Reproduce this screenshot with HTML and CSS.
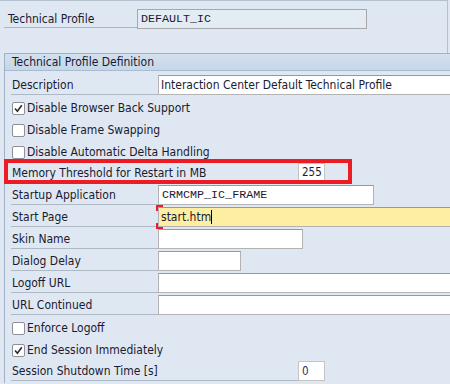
FILE: index.html
```html
<!DOCTYPE html>
<html lang="en">
<head>
  <meta charset="UTF-8" />
  <title>Technical Profile</title>
  <meta name="viewport" content="width=device-width, initial-scale=1.0" />
  <link rel="stylesheet" href="styles.css">
</head>
<body>
  <!-- Header profile key -->
  <div class="top">
    <span class="top-label">Technical Profile</span>
    <span class="field key mono">DEFAULT_IC</span>
  </div>

  <!-- Definition group -->
  <div class="group">
    <div class="group-title">Technical Profile Definition</div>
    <div class="rows">
      <div class="row">
        <span class="lbl">Description</span>
        <span class="field wide">Interaction Center Default Technical Profile</span>
      </div>
      <div class="row check">
        <span class="box on"><svg width="13" height="13" viewBox="0 0 13 13"><path d="M3 6.5 L5.4 9.3 L9.8 3.2" fill="none" stroke="#2b2b2b" stroke-width="1.6"/></svg></span>
        <span>Disable Browser Back Support</span>
      </div>
      <div class="row check">
        <span class="box"></span>
        <span>Disable Frame Swapping</span>
      </div>
      <div class="row check">
        <span class="box"></span>
        <span>Disable Automatic Delta Handling</span>
      </div>
      <div class="row marked">
        <span class="lbl long">Memory Threshold for Restart in MB</span>
        <span class="field num small">255</span>
        <div class="mark"></div>
      </div>
      <div class="row">
        <span class="lbl">Startup Application</span>
        <span class="field mono startup">CRMCMP_IC_FRAME</span>
      </div>
      <div class="row">
        <span class="lbl">Start Page</span>
        <span class="field wide focus">start.htm<i class="caret"></i></span>
      </div>
      <div class="row">
        <span class="lbl">Skin Name</span>
        <span class="field skin"></span>
      </div>
      <div class="row">
        <span class="lbl">Dialog Delay</span>
        <span class="field delay"></span>
      </div>
      <div class="row">
        <span class="lbl">Logoff URL</span>
        <span class="field wide"></span>
      </div>
      <div class="row">
        <span class="lbl">URL Continued</span>
        <span class="field wide"></span>
      </div>
      <div class="row check">
        <span class="box"></span>
        <span>Enforce Logoff</span>
      </div>
      <div class="row check">
        <span class="box on"><svg width="13" height="13" viewBox="0 0 13 13"><path d="M3 6.5 L5.4 9.3 L9.8 3.2" fill="none" stroke="#2b2b2b" stroke-width="1.6"/></svg></span>
        <span>End Session Immediately</span>
      </div>
      <div class="row">
        <span class="lbl long">Session Shutdown Time [s]</span>
        <span class="field num small zero">0</span>
      </div>
    </div>
  </div>
</body>
</html>
```

FILE: styles.css
```css
/* base */
body {
  margin: 0;
  width: 450px;
  height: 384px;
  overflow: hidden;
  background: #dfe8f2;
  color: #1a1a30;
  font-family: "DejaVu Sans Condensed", "DejaVu Sans", sans-serif;
  font-size: 12px;
}
.mono { font-family: "Liberation Mono", monospace; font-size: 11.7px; }

/* top key row */
.top {
  height: 53px;
  box-sizing: border-box;
  width: 448px;
  border-top: 1px solid #b3c1cf;
  border-right: 1px solid #b3c1cf;
  padding: 8px 0 0 4px;
  display: flex;
  align-items: flex-start;
}
.top-label {
  width: 133px;
  height: 19px;
  line-height: 20px;
  padding-left: 4px;
  box-sizing: border-box;
  border-bottom: 1px solid #aab6c2;
}
.field {
  display: block;
  height: 20px;
  box-sizing: border-box;
  line-height: 18px;
  padding-left: 2px;
  background: #fff;
  border: 1px solid #b3b3b3;
  border-top-color: #999;
  white-space: nowrap;
  overflow: hidden;
}
.field.key {
  width: 230px;
  padding-left: 3px;
  background: #e4ecf3;
  border-color: #a8a8a8;
}

/* group */
.group {
  margin-left: 4px;
  border-left: 1px solid #9fb2c6;
  border-top: 1px solid #9fb2c6;
}
.group-title {
  height: 16px;
  line-height: 16px;
  padding-left: 7px;
  background: linear-gradient(#d3e0ed, #c5d7e9);
  border-bottom: 1px solid #a8bbcf;
}
.rows { padding-top: 4px; }
.row {
  height: 22px;
  display: flex;
  align-items: flex-start;
  padding-left: 6px;
  position: relative;
}
.lbl {
  width: 147px;
  height: 20px;
  line-height: 20px;
  padding-left: 1px;
  box-sizing: border-box;
  border-bottom: 1px solid #adb9c5;
  flex: none;
}
.lbl.long { width: 287px; }
.field.wide { width: 300px; flex: none; }
.field.startup { width: 216px; padding-left: 3px; }
.field.skin { width: 145px; }
.field.delay { width: 83px; }
.field.small {
  width: 27px;
  padding-left: 3px;
  border-color: #c4c4c4;
  font-size: 11.5px;
}
.row.marked .field.small { height: 18px; line-height: 16px; }
.zero { color: #203070; }

/* focused field */
.field.focus {
  background: #fdeea2;
  overflow: visible;
  position: relative;
}
.field.focus::before,
.field.focus::after {
  content: "";
  position: absolute;
  left: -3px;
  width: 5px;
  height: 4px;
  border-left: 2px solid #e5202a;
}
.field.focus::before { top: -3px; border-top: 2px solid #e5202a; }
.field.focus::after { bottom: -3px; border-bottom: 2px solid #e5202a; }
.caret {
  display: inline-block;
  width: 1px;
  height: 14px;
  background: #000;
  vertical-align: -3px;
}

/* checkboxes */
.row.check { padding-left: 7px; line-height: 22px; }
.box {
  width: 13px;
  height: 13px;
  box-sizing: border-box;
  margin: 5px 2px 0 0;
  background: #fff;
  border: 1px solid #8d9096;
  border-radius: 2px;
  flex: none;
  position: relative;
}
.box svg { position: absolute; left: -1px; top: -1px; }

/* red highlight frame */
.mark {
  position: absolute;
  left: -1px;
  top: -4px;
  width: 348px;
  height: 25px;
  box-sizing: border-box;
  border: 4px solid #ec1c24;
}
```
